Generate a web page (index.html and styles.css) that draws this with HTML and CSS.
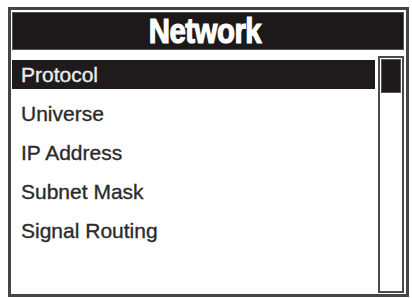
FILE: index.html
```html
<!DOCTYPE html>
<html>
<head>
<meta charset="utf-8">
<link rel="stylesheet" href="styles.css">
</head>
<body>
<div class="frame">
  <div class="header"><span class="title">Network</span></div>
  <div class="content">
    <ul class="menu">
      <li class="item selected">Protocol</li>
      <li class="item">Universe</li>
      <li class="item">IP Address</li>
      <li class="item">Subnet Mask</li>
      <li class="item">Signal Routing</li>
    </ul>
    <div class="scrollbar"><div class="thumb"></div></div>
  </div>
</div>
</body>
</html>
```
FILE: styles.css
```css
html, body {
  margin: 0;
  padding: 0;
  background: #ffffff;
}
body {
  font-family: "Liberation Sans", Arial, sans-serif;
}
.frame {
  box-sizing: border-box;
  margin: 7px 0 0 8px;
  width: 401px;
  height: 290px;
  border: 3px solid #454545;
  padding: 2px 2px 0 1px;
  display: flex;
  flex-direction: column;
}
.header {
  box-sizing: border-box;
  height: 38px;
  background: #1d191a;
  border: 1px solid #555;
  display: flex;
  justify-content: center;
  align-items: flex-start;
}
.title {
  display: inline-block;
  color: #ffffff;
  font-weight: bold;
  font-size: 35px;
  line-height: 36px;
  transform: scaleX(0.84);
  margin-left: -6px;
  letter-spacing: -0.6px;
  -webkit-text-stroke: 1.2px #ffffff;
}
.content {
  display: flex;
  gap: 3px;
  margin-top: 6px;
  height: 237px;
}
.menu {
  list-style: none;
  margin: 0;
  padding: 4px 0 0 0;
  flex: 1;
  display: flex;
  flex-direction: column;
  gap: 10px;
}
.item {
  height: 29px;
  box-sizing: border-box;
  padding: 1px 0 0 9px;
  font-size: 21px;
  line-height: 28px;
  color: #2b2b2b;
  -webkit-text-stroke: 0.35px #2b2b2b;
}
.item.selected {
  background: #1f1b1c;
  color: #ececec;
  -webkit-text-stroke: 0.35px #ececec;
}
.scrollbar {
  box-sizing: border-box;
  width: 26px;
  height: 237px;
  border: 2px solid #4a4a4a;
  padding: 1px 1px;
}
.thumb {
  height: 34px;
  background: #1e1a1b;
  border: 1px solid #555;
  box-sizing: border-box;
}
```
